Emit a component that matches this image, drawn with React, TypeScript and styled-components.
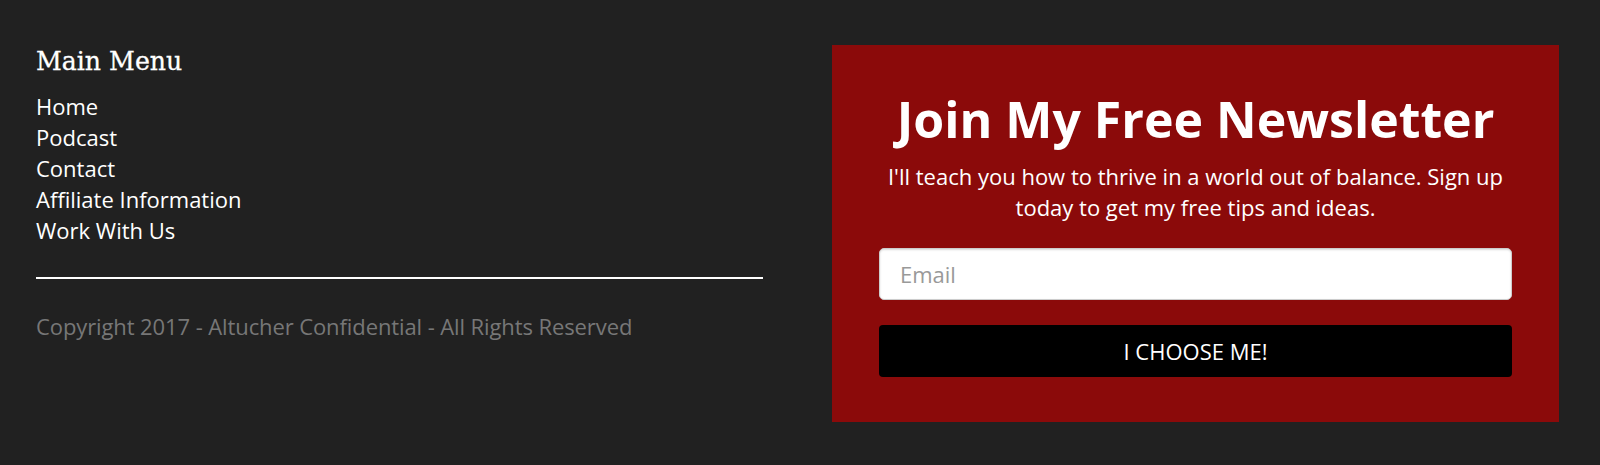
import React from "react";
import styled, { createGlobalStyle } from "styled-components";

const GlobalStyle = createGlobalStyle`
    html, body {
        margin: 0;
        padding: 0;
        background: #212121;
    }
    body {
        font-family: "Open Sans", "Liberation Sans", sans-serif;
    }
`;

const menuLinks = ["Home", "Podcast", "Contact", "Affiliate Information", "Work With Us"];

const App = () => {
    return (
        <>
            <GlobalStyle />
            <Footer>
                <MenuColumn>
                    <MenuTitle>Main Menu</MenuTitle>
                    <MenuList>
                        {menuLinks.map((link) => (
                            <MenuItem key={link}>
                                <MenuLink href="#">{link}</MenuLink>
                            </MenuItem>
                        ))}
                    </MenuList>
                    <Divider />
                    <Copyright>Copyright 2017 - Altucher Confidential - All Rights Reserved</Copyright>
                </MenuColumn>

                <SignupBox>
                    <SignupTitle>Join My Free Newsletter</SignupTitle>
                    <SignupText>
                        I'll teach you how to thrive in a world out of balance. Sign up today to get my free tips and ideas.
                    </SignupText>
                    <SignupForm onSubmit={(e) => e.preventDefault()}>
                        <EmailInput type="email" placeholder="Email" />
                        <SubmitButton type="submit">I CHOOSE ME!</SubmitButton>
                    </SignupForm>
                </SignupBox>
            </Footer>
        </>
    );
};

export default App;



const Footer = styled.footer`
    display: grid;
    grid-template-columns: 727px 727px;
    column-gap: 69px;
    padding: 45px 41px 43px 36px;
    min-height: 465px;
    box-sizing: border-box;
    background: #212121;
`;

const MenuColumn = styled.div`
    display: flex;
    flex-direction: column;
    padding-top: 2px;
`;

const MenuTitle = styled.h3`
    margin: 0 0 14px;
    font-family: "DejaVu Serif", "Liberation Serif", serif;
    font-size: 25.2px;
    font-weight: normal;
    color: #fff;
    line-height: 30px;
    -webkit-text-stroke: 0.3px #fff;
`;

const MenuList = styled.ul`
    list-style: none;
    margin: 0;
    padding: 0;
`;

const MenuItem = styled.li`
    height: 31px;
`;

const MenuLink = styled.a`
    display: block;
    color: #fff;
    font-size: 22px;
    line-height: 31px;
    text-decoration: none;
`;

const Divider = styled.hr`
    width: 100%;
    margin: 31px 0 0;
    border: none;
    border-top: 2px solid #fff;
`;

const Copyright = styled.p`
    margin: 32px 0 0;
    color: #777;
    font-size: 22px;
    line-height: 31px;
    letter-spacing: -0.1px;
`;

const SignupBox = styled.section`
    background: #8b0a0a;
    padding: 39px 47px 45px;
    text-align: center;
    color: #fff;
    height: 377px;
    box-sizing: border-box;
`;

const SignupTitle = styled.h2`
    margin: 0;
    font-size: 50px;
    font-weight: 700;
    line-height: 70px;
`;

const SignupText = styled.p`
    margin: 7px 0 0;
    font-size: 22px;
    line-height: 31px;
`;

const SignupForm = styled.form`
    display: flex;
    flex-direction: column;
    gap: 25px;
    margin-top: 25px;
`;

const EmailInput = styled.input`
    height: 52px;
    padding: 0 20px;
    box-sizing: border-box;
    border: 1px solid #ccc;
    border-radius: 5px;
    background: #fff;
    font-family: "Open Sans", "Liberation Sans", sans-serif;
    font-size: 22px;
    color: #333;
    box-shadow: inset 0 1px 2px rgba(0, 0, 0, 0.15);

    &::placeholder {
        color: #999;
    }
`;

const SubmitButton = styled.button`
    height: 52px;
    border: none;
    border-radius: 4px;
    background: #000;
    color: #fff;
    font-family: "Open Sans", "Liberation Sans", sans-serif;
    font-size: 22px;
    cursor: pointer;
`;
